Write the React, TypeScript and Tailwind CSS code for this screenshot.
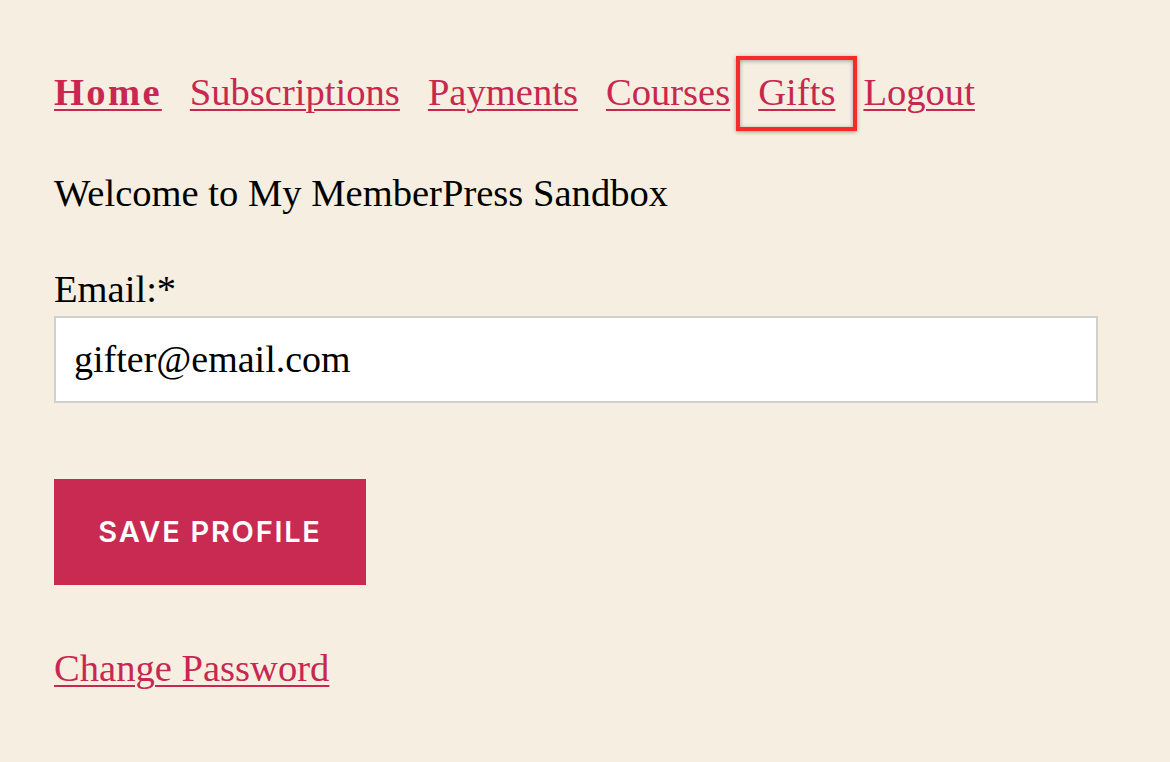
const serif = { fontFamily: '"Liberation Serif", "Times New Roman", serif' };

const links = ['Home', 'Subscriptions', 'Payments', 'Courses', 'Gifts', 'Logout'];

const linkCls = 'text-[#c8284f] underline underline-offset-[4px] decoration-2';

export default function App() {
  return (
    <div className="min-h-screen bg-[#f5eee1] px-[54px] pt-[69px] text-black" style={serif}>
      <nav className="flex items-baseline gap-[28px] text-[38.6px] leading-[1.2]">
        {links.map((l) => {
          if (l === 'Home') {
            return (
              <a key={l} href="#" className={`${linkCls} font-bold tracking-[0.06em]`}>
                {l}
              </a>
            );
          }
          if (l === 'Gifts') {
            return (
              <span key={l} className="relative">
                <a href="#" className={linkCls}>
                  {l}
                </a>
                <span className="pointer-events-none absolute -left-[22px] -right-[22px] -top-[13px] -bottom-[16px] border-[4px] border-[#f52a2a] shadow-[0_1px_4px_rgba(0,0,0,0.35),inset_0_1px_4px_rgba(0,0,0,0.35)]" />
              </span>
            );
          }
          return (
            <a key={l} href="#" className={linkCls}>
              {l}
            </a>
          );
        })}
      </nav>

      <p className="mt-[55px] text-[38.6px] leading-[1.2]">Welcome to My MemberPress Sandbox</p>

      <form className="mt-[49px]" onSubmit={(e) => e.preventDefault()}>
        <label className="block text-[38.6px] leading-[1.2]">Email:*</label>
        <input
          readOnly
          value="gifter@email.com"
          className="mt-[4px] block h-[87px] w-[1044px] border-2 border-[#d0d0cc] bg-white px-[18px] text-[38px] text-black outline-none"
          style={serif}
        />
        <button
          type="submit"
          className="mt-[76px] flex h-[106px] w-[312px] items-center justify-center bg-[#c92a52] text-[29px] font-semibold tracking-[0.06em] text-white"
          style={{ fontFamily: 'Inter, "Liberation Sans", sans-serif' }}
        >
          SAVE PROFILE
        </button>
      </form>

      <a href="#" className={`${linkCls} mt-[60px] inline-block text-[38.6px] leading-[1.2]`}>
        Change Password
      </a>
    </div>
  );
}
